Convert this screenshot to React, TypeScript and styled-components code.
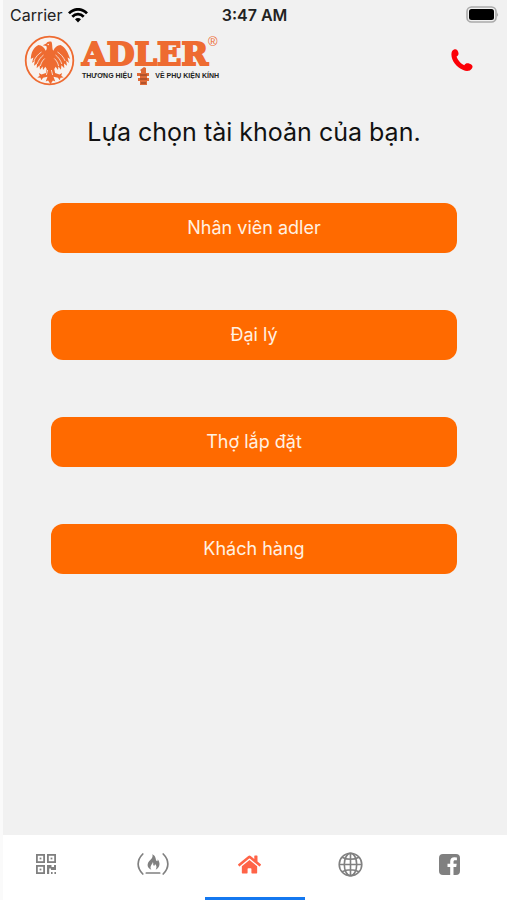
import React from "react";
import styled, { createGlobalStyle } from "styled-components";
import { FaHome } from "react-icons/fa";

const GlobalStyle = createGlobalStyle`
  * { box-sizing: border-box; }
  body { margin: 0; background: #fafafa; font-family: Inter, "Noto Sans", sans-serif; }
`;

const Screen = styled.div`
  min-height: 100vh;
  margin-left: 3px;
  display: flex;
  flex-direction: column;
  background: #f1f1f1;
`;

const StatusBar = styled.div`
  display: grid;
  grid-template-columns: 1fr auto 1fr;
  align-items: center;
  height: 30px;
  padding: 0 8px 0 7px;
  font-size: 16px;
  line-height: 20px;
  color: #222;
`;

const Carrier = styled.div`
  display: flex;
  align-items: center;
  gap: 6px;
`;

const Clock = styled.time`
  font-weight: 600;
`;

const BatterySlot = styled.div`
  display: flex;
  justify-content: flex-end;
  padding-bottom: 2px;
`;

const Header = styled.header`
  display: flex;
  align-items: center;
  justify-content: space-between;
  height: 64px;
  padding: 0 34px 4px 21px;
`;

const Brand = styled.a`
  display: flex;
  align-items: center;
  gap: 7px;
  color: #ee6b31;
  text-decoration: none;
`;

const BrandText = styled.div`
  display: flex;
  flex-direction: column;
`;

const Wordmark = styled.div`
  display: flex;
  align-items: flex-start;
  height: 31px;
`;

const WordmarkName = styled.span`
  padding-top: 3px;
  font-family: "DejaVu Serif", serif;
  font-size: 32px;
  line-height: 30px;
  font-weight: 700;
  -webkit-text-stroke: 2px #ee6b31;
`;

const Registered = styled.span`
  font-family: "Liberation Sans", sans-serif;
  font-size: 13px;
  line-height: 12px;
`;

const Tagline = styled.div`
  display: flex;
  align-items: center;
  gap: 5px;
  height: 18px;
  font-family: "Liberation Sans", sans-serif;
  font-size: 7px;
  line-height: 10px;
  font-weight: 700;
  color: #222;
  white-space: nowrap;
`;

const CallButton = styled.button`
  display: flex;
  padding: 0;
  border: 0;
  background: none;
  color: #fb0007;
`;

const Main = styled.main`
  flex: 1;
  padding: 20px 50px 0 48px;
`;

const Title = styled.h1`
  margin: 0 0 52px;
  font-size: 25px;
  line-height: 37px;
  font-weight: 400;
  text-align: center;
  white-space: nowrap;
  color: #111;
`;

const Choices = styled.div`
  display: flex;
  flex-direction: column;
  gap: 57px;
`;

const Choice = styled.button`
  height: 50px;
  padding: 0;
  border: 0;
  border-radius: 12px;
  background: #ff6a00;
  color: #fff1e2;
  font-family: inherit;
  font-size: 18px;
  line-height: 24px;
`;

const TabBar = styled.nav`
  display: grid;
  grid-template-columns: repeat(5, 1fr);
  height: 65px;
  background: #fff;
`;

const Tab = styled.button<{ $active?: boolean }>`
  display: flex;
  align-items: center;
  padding: 0 0 4px 33px;
  border: 0;
  border-bottom: 3px solid ${(p) => (p.$active ? "#1478f0" : "transparent")};
  background: none;
  color: ${(p) => (p.$active ? "#ff6347" : "#808080")};
`;

const Wifi = () => (
  <svg width="20" height="15" viewBox="0 0 20 15" fill="none" stroke="#000" strokeWidth="2.7">
    <path d="M1 5.4C6-.1 14-.1 19 5.4" />
    <path d="M4.3 8.8c3.3-3.5 8.1-3.5 11.4 0" />
    <path d="M7 11.2c1.8-1.6 4.2-1.6 6 0L10 14.4z" fill="#000" stroke="none" />
  </svg>
);

const Battery = () => (
  <svg width="33" height="17" viewBox="0 0 33 17">
    <rect x="1" y="1" width="29" height="15" rx="4.5" fill="#f1f1f1" stroke="#aaa" strokeWidth="1.6" />
    <rect x="3" y="3" width="25" height="11" rx="2.5" />
    <path d="M31.2 6.2q1.6 2.3 0 4.6z" fill="#999" />
  </svg>
);

const Phone = () => (
  <svg width="22" height="23" viewBox="0 0 22 23" fill="currentColor">
    <path d="M3 .6C5.200-.2 6.300.6 7.200 3c.8 2.300.2 3.600-1.600 4.600C6.400 11 9.800 14.800 13.300 16.200c1.300-1.900 2.900-2.300 5.300-1.400 3 1 3.600 2.600 2.300 4.700-1.700 2.800-5.400 3.100-8.700 1.600C5.300 18 .6 12 .4 5.600.4 3 1.200 1.300 3 .6z" />
  </svg>
);

const Eagle = () => (
  <svg width="51" height="51" viewBox="0 0 51 51" fill="#ee6b31">
    <circle cx="25.5" cy="25.5" r="23.8" fill="#f8f2ef" stroke="#ee6b31" strokeWidth="1.8" />
    <path d="M27.500 6.800c-2.300-.8-4.600 0-5.200 1.700l-3.600 1.700 3.600.9c.8 1.500.6 3.400-.6 4.700-1.200-3.300-4-5.600-7.200-5.700C9.500 12 7 18 6.800 24l2.600-1.600-1.400 5.600 2.800-2.200-.8 5 3-2.400-.3 4.800 2.900-2.900.4 4.500 2.600-3.300.4 3.600 2.300-3.400 1.400 2.200-.8 4-4.400 1.600-2.600-1.600.8 2.800-2.400 1.800 3.200.2.8 2.600 1.800-2.600 4.400-1-1.800 4.700 2.400-.8 2.400 3.600 2.400-3.600 2.400.8-1.800-4.700 4.400 1 1.800 2.600.8-2.600 3.200-.2-2.400-1.800.8-2.800-2.600 1.600-4.400-1.600-.8-4 1.400-2.200 2.300 3.400.4-3.600 2.600 3.300.4-4.500 2.900 2.900-.3-4.800 3 2.400-.8-5 2.800 2.200-1.400-5.600 2.600 1.600C44 18 41.500 12 36.500 10.100c-3.200.1-6 2.400-7.200 5.700-1.400-1.600-.6-6-1.800-9z" />
    <path d="M17.500 17c-3.300 2-6 5.200-7.600 9M19.500 20c-3 2.300-5 5.200-6.300 9M20.700 23.500c-2.300 2-3.600 4.600-4.300 7.500M33.500 17c3.300 2 6 5.200 7.600 9M31.500 20c3 2.300 5 5.200 6.300 9M30.300 23.500c2.300 2 3.600 4.600 4.300 7.500M23.600 35l-1.200 5M27.400 35l1.200 5" fill="none" stroke="#f8f2ef" strokeWidth=".8" />
    <circle cx="24.200" cy="9.500" r=".7" fill="#fff" />
  </svg>
);

const Hinge = () => (
  <svg width="13" height="18" viewBox="0 0 13 18" fill="#df6a37">
    <path d="M3 3l4-3 2 1v5h3v3h-2v2h2v3h-2v4H3v-4H1v-3h2V9H0V6h4V4z" />
    <path d="M3 8h7M3 12h7M4 16h5" stroke="#873d20" strokeWidth="1" />
  </svg>
);

const Qr = () => (
  <svg width="20" height="20" viewBox="0 0 20 20" fill="currentColor">
    {[[0, 0], [11, 0], [0, 11]].map(([x, y]) => (
      <g key={`${x}-${y}`}>
        <rect x={x + 0.9} y={y + 0.9} width="7.200" height="7.200" fill="none" stroke="currentColor" strokeWidth="1.800" />
        <rect x={x + 3.6} y={y + 3.6} width="1.800" height="1.800" />
      </g>
    ))}
    <path d="M11 11h4.500v2H18v-2h2v5h-5v-1.600h-1.800V20H11zM15 18h1.600v2H15zM18.400 18H20v2h-1.600z" />
  </svg>
);

const Campfire = () => (
  <svg width="32" height="22" viewBox="0 0 32 22" fill="none" stroke="currentColor" strokeWidth="1.700" strokeLinecap="round">
    <path d="M5.800 1C-.4 7.200-.4 14.800 5.800 21M26.200 1c6.200 6.200 6.200 13.800 0 20M9.300 20h13.400" />
    <path d="M15.200 1.200c4.200 1.800 3.100 5 4.300 6.600.8.9 1.500-.2 1.100-1.500 2.900 3.200 2.700 8.300-1.900 10.400 1.500-2.600.7-4.400-.8-5.600.2 1.300-.6 2-1.300 1.500-.9-.7.2-2.200-.8-3.700-.1 2.400-3.900 4.200-1.400 7.800-4.500-1.500-4.600-5.700-2.300-8.400 1.800-2.100 4.500-4 3.100-7.100z" fill="currentColor" stroke="none" />
  </svg>
);

const Globe = () => (
  <svg width="25" height="25" viewBox="0 0 25 25" fill="none" stroke="currentColor" strokeWidth="1.600">
    <circle cx="12.500" cy="12.500" r="11.300" />
    <ellipse cx="12.500" cy="12.500" rx="6.200" ry="11.300" />
    <path d="M12.500 1v23M1 12.500h23M4 5.200q8.500 4.200 17 0M4 19.800q8.500-4.200 17 0" />
  </svg>
);

const Facebook = () => (
  <svg width="21" height="21" viewBox="0 0 21 21" fill="currentColor">
    <path d="M4 0h13a4 4 0 0 1 4 4v13a4 4 0 0 1-4 4h-2.500v-8h2.700l.5-3.200h-3.200V7.800c0-1 .4-1.600 1.700-1.600h1.700V3.400l-2.500-.2c-2.600 0-4.200 1.500-4.200 4.300v2.300H8.500V13h2.700v8H4a4 4 0 0 1-4-4V4a4 4 0 0 1 4-4z" />
  </svg>
);

const accounts = ["Nhân viên adler", "Đại lý", "Thợ lắp đặt", "Khách hàng"];

const tabs = [
  { label: "QR", icon: <Qr /> },
  { label: "Hot", icon: <Campfire /> },
  { label: "Home", icon: <FaHome size={23} />, active: true },
  { label: "Website", icon: <Globe /> },
  { label: "Facebook", icon: <Facebook /> },
];

export default function App() {
  return (
    <>
      <GlobalStyle />
      <Screen>
        <StatusBar>
          <Carrier>
            Carrier
            <Wifi />
          </Carrier>
          <Clock>3:47 AM</Clock>
          <BatterySlot>
            <Battery />
          </BatterySlot>
        </StatusBar>
        <Header>
          <Brand href="#">
            <Eagle />
            <BrandText>
              <Wordmark>
                <WordmarkName>ADLER</WordmarkName>
                <Registered>®</Registered>
              </Wordmark>
              <Tagline>
                <span>THƯƠNG HIỆU</span>
                <Hinge />
                <span>VỀ PHỤ KIỆN KÍNH</span>
              </Tagline>
            </BrandText>
          </Brand>
          <CallButton aria-label="Call">
            <Phone />
          </CallButton>
        </Header>
        <Main>
          <Title>Lựa chọn tài khoản của bạn.</Title>
          <Choices>
            {accounts.map((name) => (
              <Choice key={name}>{name}</Choice>
            ))}
          </Choices>
        </Main>
        <TabBar>
          {tabs.map((tab) => (
            <Tab key={tab.label} aria-label={tab.label} $active={tab.active}>
              {tab.icon}
            </Tab>
          ))}
        </TabBar>
      </Screen>
    </>
  );
}
